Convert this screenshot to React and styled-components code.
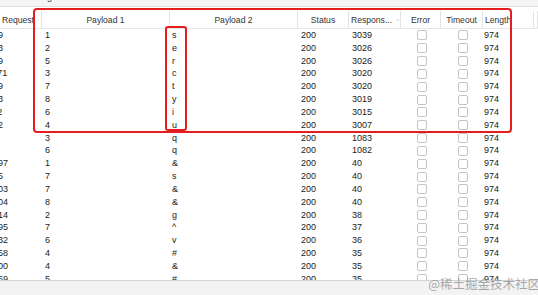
import React from "react";
import styled, { createGlobalStyle } from "styled-components";

const rows = [
    { req: "129", p1: "1", p2: "s", res: "3039" },
    { req: "123", p1: "2", p2: "e", res: "3026" },
    { req: "139", p1: "5", p2: "r", res: "3026" },
    { req: "1171", p1: "3", p2: "c", res: "3020" },
    { req: "149", p1: "7", p2: "t", res: "3020" },
    { req: "133", p1: "8", p2: "y", res: "3019" },
    { req: "112", p1: "6", p2: "i", res: "3015" },
    { req: "122", p1: "4", p2: "u", res: "3007" },
    { req: "18", p1: "3", p2: "q", res: "1083" },
    { req: "26", p1: "6", p2: "q", res: "1082" },
    { req: "1097", p1: "1", p2: "&", res: "40" },
    { req: "165", p1: "7", p2: "s", res: "40" },
    { req: "1003", p1: "7", p2: "&", res: "40" },
    { req: "1004", p1: "8", p2: "&", res: "40" },
    { req: "1014", p1: "2", p2: "g", res: "38" },
    { req: "1095", p1: "7", p2: "^", res: "37" },
    { req: "1032", p1: "6", p2: "v", res: "36" },
    { req: "1058", p1: "4", p2: "#", res: "35" },
    { req: "1000", p1: "4", p2: "&", res: "35" },
    { req: "1059", p1: "5", p2: "#", res: "35" },
];

const Global = createGlobalStyle`
    html, body {
        margin: 0;
        padding: 0;
        background: #fff;
    }
    body {
        font-family: "Liberation Sans", Arial, sans-serif;
    }
`;

function App() {
    return (
        <Screen>
            <Global />
            <TopStrip>
                <Clipped>g</Clipped>
            </TopStrip>
            <TableArea>
                <HeaderRow>
                    <HeadCell $align="left">Request</HeadCell>
                    <HeadCell>Payload 1</HeadCell>
                    <HeadCell>Payload 2</HeadCell>
                    <HeadCell>Status</HeadCell>
                    <HeadCell $align="left">
                        Respons...
                        <Chevron viewBox="0 0 8 5">
                            <path d="M1 1 L4 4 L7 1" />
                        </Chevron>
                    </HeadCell>
                    <HeadCell>Error</HeadCell>
                    <HeadCell>Timeout</HeadCell>
                    <HeadCell $align="left" $pad="2px">
                        Length
                    </HeadCell>
                    <HeadCell />
                </HeaderRow>
                <Body>
                    {rows.map((row, i) => (
                        <Row key={i}>
                            <ReqCell>
                                <ReqNum>{row.req}</ReqNum>
                            </ReqCell>
                            <Cell $pad="3px">{row.p1}</Cell>
                            <Cell $pad="2px">{row.p2}</Cell>
                            <Cell $pad="3px">200</Cell>
                            <Cell $pad="3px">{row.res}</Cell>
                            <CheckCell>
                                <Box />
                            </CheckCell>
                            <CheckCell>
                                <Box />
                            </CheckCell>
                            <Cell $pad="1px">974</Cell>
                            <Cell />
                        </Row>
                    ))}
                </Body>
                <BigMark />
                <SmallMark />
            </TableArea>
            <BottomBar />
            <Watermark>@稀土掘金技术社区</Watermark>
        </Screen>
    );
}

export default App;

const cols = "42px 128px 128px 51px 52px 40px 42px 51px 1fr";

const Screen = styled.div`
    position: relative;
    width: 538px;
    height: 295px;
    overflow: hidden;
    background: #fff;
    display: flex;
    flex-direction: column;
`;
const TopStrip = styled.div`
    height: 6px;
    flex: none;
    background: #f4f4f4;
    border-bottom: 1px solid #dedede;
    overflow: hidden;
    padding-left: 47px;
`;
const Clipped = styled.span`
    display: block;
    font-size: 9px;
    line-height: 9px;
    margin-top: -7px;
    color: #333;
`;
const TableArea = styled.div`
    position: relative;
    flex: 1;
    display: flex;
    flex-direction: column;
    padding-top: 4px;
    min-height: 0;
`;
const HeaderRow = styled.div`
    display: grid;
    grid-template-columns: ${cols};
    height: 17px;
    flex: none;
    border-bottom: 1px solid #e6e6e6;
    font-size: 8.6px;
    color: #333;
`;
const HeadCell = styled.div`
    display: flex;
    align-items: center;
    justify-content: ${(p) => (p.$align === "left" ? "flex-start" : "center")};
    padding-left: ${(p) => p.$pad || (p.$align === "left" ? "2px" : "0")};
    border-right: 1px solid #e4e4e4;
    white-space: nowrap;
    overflow: hidden;
`;
const Chevron = styled.svg`
    width: 6px;
    height: 4px;
    margin-left: 4px;
    fill: none;
    stroke: #aaa;
    stroke-width: 1;
`;
const Body = styled.div`
    flex: 1;
    min-height: 0;
    overflow: hidden;
`;
const Row = styled.div`
    display: grid;
    grid-template-columns: ${cols};
    height: 12.83px;
    line-height: 12.83px;
    font-size: 9px;
    color: #222;
`;
const Cell = styled.div`
    padding-left: ${(p) => p.$pad || "0"};
    white-space: nowrap;
    overflow: hidden;
`;
const ReqCell = styled.div`
    overflow: hidden;
`;
const ReqNum = styled.div`
    margin-left: -12px;
    white-space: nowrap;
`;
const CheckCell = styled.div`
    display: flex;
    align-items: center;
    justify-content: center;
    padding-left: 1px;
`;
const Box = styled.span`
    width: 8px;
    height: 8px;
    border: 1px solid #c4c4c4;
    border-radius: 2px;
    background: #fff;
`;
const BigMark = styled.div`
    position: absolute;
    left: 33px;
    top: 1px;
    width: 475px;
    height: 121px;
    border: 2.5px solid #e41e1e;
    border-radius: 4px;
    pointer-events: none;
`;
const SmallMark = styled.div`
    position: absolute;
    left: 165px;
    top: 19px;
    width: 18px;
    height: 101px;
    border: 2.5px solid #e41e1e;
    border-radius: 3px;
    pointer-events: none;
`;
const BottomBar = styled.div`
    height: 14px;
    flex: none;
    background: #f3f3f3;
    border-top: 1px solid #d4d4d4;
`;
const Watermark = styled.div`
    position: absolute;
    right: -2px;
    bottom: 4px;
    font-family: "Noto Sans CJK SC", "Noto Sans", sans-serif;
    font-size: 12.5px;
    line-height: 14px;
    color: rgba(140, 140, 140, 0.75);
`;
